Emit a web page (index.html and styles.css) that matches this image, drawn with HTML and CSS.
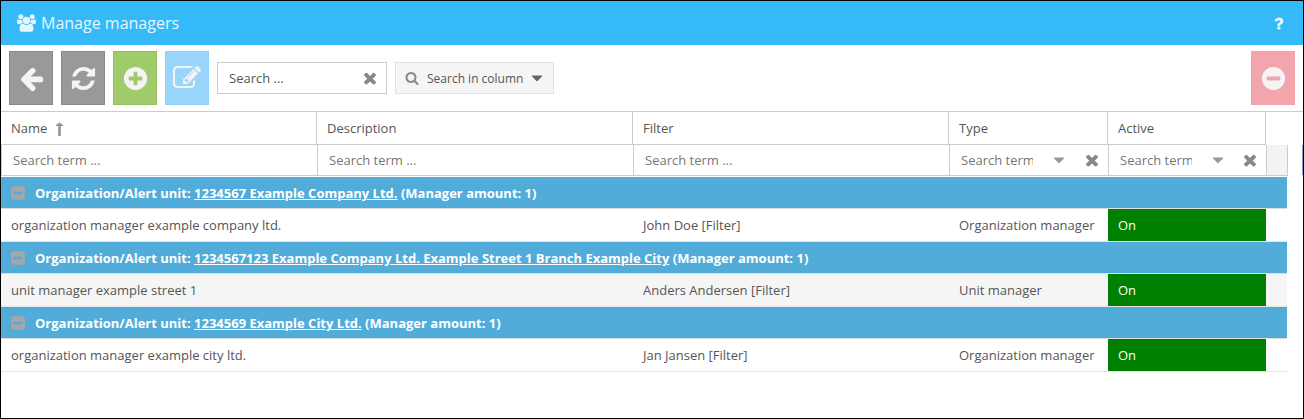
FILE: index.html
```html
<!DOCTYPE html>
<html lang="en">
<head>
    <meta charset="UTF-8">
    <title>Manage managers</title>
    <link rel="stylesheet" href="styles.css">
</head>
<body>
    <svg class="icon-defs" xmlns="http://www.w3.org/2000/svg">
        <symbol id="i-users" viewBox="0 0 1920 1792"><path d="M593 896q-162 5-265 128h-134q-82 0-138-40.500t-56-118.500q0-353 124-353 6 0 43.500 21t97.500 42.500 119 21.500q67 0 133-23-5 37-5 66 0 139 81 256zm1071 637q0 120-73 189.500t-194 69.500h-874q-121 0-194-69.500t-73-189.500q0-53 3.500-103.500t14-109 26.500-108.500 43-97.500 62-81 85.500-53.500 111.500-20q10 0 43 21.500t73 48 107 48 135 21.500 135-21.500 107-48 73-48 43-21.500q61 0 111.500 20t85.500 53.500 62 81 43 97.500 26.500 108.500 14 109 3.500 103.500zm-1024-1277q0 106-75 181t-181 75-181-75-75-181 75-181 181-75 181 75 75 181zm704 384q0 159-112.500 271.500t-271.500 112.500-271.500-112.500-112.500-271.500 112.500-271.500 271.500-112.500 271.500 112.500 112.500 271.500zm576 225q0 78-56 118.500t-138 40.500h-134q-103-123-265-128 81-117 81-256 0-29-5-66 66 23 133 23 59 0 119-21.500t97.500-42.500 43.500-21q124 0 124 353zm-128-609q0 106-75 181t-181 75-181-75-75-181 75-181 181-75 181 75 75 181z"/></symbol>
        <symbol id="i-question" viewBox="0 0 1792 1792"><path d="M1088 1256v240q0 16-12 28t-28 12h-240q-16 0-28-12t-12-28v-240q0-16 12-28t28-12h240q16 0 28 12t12 28zm316-600q0 54-15.500 101t-35 76.500-55 59.500-57.500 43.500-61 35.500q-41 23-68.500 65t-27.500 67q0 17-12 32.500t-28 15.500h-240q-15 0-25.500-18.500t-10.500-37.500v-45q0-83 65-156.500t143-108.500q59-27 84-56t25-76q0-42-46.500-74t-107.500-32q-65 0-108 29-35 25-107 115-13 16-31 16-12 0-25-8l-164-125q-13-10-15.500-25t5.500-28q160-266 464-266 80 0 161 31t146 83 106 127.500 41 158.500z"/></symbol>
        <symbol id="i-back" viewBox="0 0 1792 1792"><path d="M1664 896v128q0 53-32.500 90.500t-84.500 37.500h-704l293 294q38 36 38 90t-38 90l-75 76q-38 38-90 38-53 0-91-38l-651-652q-37-37-37-90 0-52 37-91l651-650q38-38 91-38 52 0 90 38l75 74q38 38 38 91t-38 91l-293 293h704q52 0 84.500 37.500t32.500 90.500z"/></symbol>
        <symbol id="i-refresh" viewBox="0 0 1792 1792"><path d="M1639 1056q0 5-1 7-64 268-268 434.500t-478 166.500q-146 0-282.500-55t-243.500-157l-129 129q-19 19-45 19t-45-19-19-45v-448q0-26 19-45t45-19h448q26 0 45 19t19 45-19 45l-137 137q71 66 161 102t187 36q134 0 250-65t186-179q11-17 53-117 8-23 30-23h192q13 0 22.500 9.500t9.500 22.500zm25-800v448q0 26-19 45t-45 19h-448q-26 0-45-19t-19-45 19-45l138-138q-148-137-349-137-134 0-250 65t-186 179q-11 17-53 117-8 23-30 23h-199q-13 0-22.500-9.500t-9.500-22.500v-7q65-268 270-434.500t480-166.500q146 0 284 55.500t245 156.500l130-129q19-19 45-19t45 19 19 45z"/></symbol>
        <symbol id="i-plus" viewBox="0 0 1792 1792"><path d="M1344 960v-128q0-26-19-45t-45-19h-256v-256q0-26-19-45t-45-19h-128q-26 0-45 19t-19 45v256h-256q-26 0-45 19t-19 45v128q0 26 19 45t45 19h256v256q0 26 19 45t45 19h128q26 0 45-19t19-45v-256h256q26 0 45-19t19-45zm320-64q0 209-103 385.500t-279.500 279.500-385.500 103-385.500-103-279.500-279.500-103-385.500 103-385.500 279.500-279.500 385.500-103 385.500 103 279.500 279.500 103 385.500z"/></symbol>
        <symbol id="i-minus" viewBox="0 0 1792 1792"><path d="M1344 960v-128q0-26-19-45t-45-19h-768q-26 0-45 19t-19 45v128q0 26 19 45t45 19h768q26 0 45-19t19-45zm320-64q0 209-103 385.500t-279.500 279.500-385.500 103-385.500-103-279.500-279.500-103-385.500 103-385.500 279.500-279.500 385.500-103 385.500 103 279.500 279.500 103 385.500z"/></symbol>
        <symbol id="i-edit" viewBox="0 0 1792 1792"><path d="M888 1184l116-116-152-152-116 116v56h96v96h56zm440-720q-16-16-33 1l-350 350q-17 17-1 33t33-1l350-350q17-17 1-33zm80 594v190q0 119-84.500 203.500t-203.500 84.500h-832q-119 0-203.500-84.500t-84.500-203.500v-832q0-119 84.500-203.500t203.500-84.500h832q63 0 117 25 15 7 18 23 3 17-9 29l-49 49q-14 14-32 8-23-6-45-6h-832q-66 0-113 47t-47 113v832q0 66 47 113t113 47h832q66 0 113-47t47-113v-126q0-13 9-22l64-64q15-15 35-7t20 29zm-96-738l288 288-672 672h-288v-288zm444 132l-92 92-288-288 92-92q28-28 68-28t68 28l152 152q28 28 28 68t-28 68z"/></symbol>
        <symbol id="i-times" viewBox="0 0 1792 1792"><path d="M1490 1322q0 40-28 68l-136 136q-28 28-68 28t-68-28l-294-294-294 294q-28 28-68 28t-68-28l-136-136q-28-28-28-68t28-68l294-294-294-294q-28-28-28-68t28-68l136-136q28-28 68-28t68 28l294 294 294-294q28-28 68-28t68 28l136 136q28 28 28 68t-28 68l-294 294 294 294q28 28 28 68z"/></symbol>
        <symbol id="i-search" viewBox="0 0 1792 1792"><path d="M1216 832q0-185-131.500-316.500t-316.500-131.500-316.500 131.500-131.500 316.500 131.500 316.500 316.500 131.500 316.500-131.500 131.500-316.500zm512 832q0 52-38 90t-90 38q-54 0-90-38l-343-342q-179 124-399 124-143 0-273.500-55.500t-225-150-150-225-55.500-273.500 55.500-273.500 150-225 225-150 273.500-55.500 273.500 55.500 225 150 150 225 55.500 273.500q0 220-124 399l343 343q37 37 37 90z"/></symbol>
        <symbol id="i-caret" viewBox="0 0 1792 1792"><path d="M1408 704q0 26-19 45l-448 448q-19 19-45 19t-45-19l-448-448q-19-19-19-45t19-45 45-19h896q26 0 45 19t19 45z"/></symbol>
        <symbol id="i-sort" viewBox="0 0 1792 1792" preserveAspectRatio="none"><path d="M1277 493q-9 19-29 19h-224v1248q0 14-9 23t-23 9h-192q-14 0-23-9t-9-23v-1248h-224q-21 0-29-19t5-35l350-384q10-10 23-10 14 0 24 10l355 384q13 16 5 35z"/></symbol>
        <symbol id="i-toggle" viewBox="0 0 1792 1792"><path d="M1408 960v-128q0-26-19-45t-45-19h-896q-26 0-45 19t-19 45v128q0 26 19 45t45 19h896q26 0 45-19t19-45zm256-544v960q0 119-84.500 203.500t-203.500 84.500h-960q-119 0-203.500-84.500t-84.500-203.500v-960q0-119 84.500-203.500t203.500-84.500h960q119 0 203.500 84.500t84.500 203.500z"/></symbol>
    </svg>

    <div class="window">
        <header class="title-bar">
            <svg class="title-icon"><use href="#i-users"/></svg>
            <span class="title-text">Manage managers</span>
            <svg class="help-icon"><use href="#i-question"/></svg>
        </header>

        <div class="toolbar">
            <button class="tool-btn btn-grey"><svg><use href="#i-back"/></svg></button>
            <button class="tool-btn btn-grey"><svg><use href="#i-refresh"/></svg></button>
            <button class="tool-btn btn-green"><svg><use href="#i-plus"/></svg></button>
            <button class="tool-btn btn-blue"><svg><use href="#i-edit"/></svg></button>
            <div class="search-box">
                <span class="search-text">Search ...</span>
                <svg class="clear-icon"><use href="#i-times"/></svg>
            </div>
            <div class="column-select">
                <svg class="search-icon"><use href="#i-search"/></svg>
                <span class="column-label">Search in column</span>
                <svg class="caret-icon"><use href="#i-caret"/></svg>
            </div>
            <button class="tool-btn btn-red"><svg><use href="#i-minus"/></svg></button>
        </div>

        <div class="grid-head">
            <div class="head-cell">Name <svg class="sort-icon"><use href="#i-sort"/></svg></div>
            <div class="head-cell">Description</div>
            <div class="head-cell">Filter</div>
            <div class="head-cell">Type</div>
            <div class="head-cell">Active</div>
        </div>

        <div class="grid-filter">
            <div class="filter-cell">Search term ...</div>
            <div class="filter-cell">Search term ...</div>
            <div class="filter-cell">Search term ...</div>
            <div class="filter-cell filter-select">
                <span class="filter-clip">Search term</span>
                <svg class="filter-caret"><use href="#i-caret"/></svg>
                <svg class="filter-clear"><use href="#i-times"/></svg>
            </div>
            <div class="filter-cell filter-select">
                <span class="filter-clip">Search term</span>
                <svg class="filter-caret"><use href="#i-caret"/></svg>
                <svg class="filter-clear"><use href="#i-times"/></svg>
            </div>
            <div class="filter-end"></div>
        </div>

        <div class="group-row">
            <svg class="group-toggle"><use href="#i-toggle"/></svg>
            <span>Organization/Alert unit: <a href="#">1234567 Example Company Ltd.</a> (Manager amount: 1)</span>
        </div>
        <div class="data-row">
            <div class="data-cell">organization manager example company ltd.</div>
            <div class="data-cell"></div>
            <div class="data-cell">John Doe [Filter]</div>
            <div class="data-cell">Organization manager</div>
            <div class="data-cell state-on">On</div>
        </div>

        <div class="group-row">
            <svg class="group-toggle"><use href="#i-toggle"/></svg>
            <span>Organization/Alert unit: <a href="#">1234567123 Example Company Ltd. Example Street 1 Branch Example City</a> (Manager amount: 1)</span>
        </div>
        <div class="data-row row-alt">
            <div class="data-cell">unit manager example street 1</div>
            <div class="data-cell"></div>
            <div class="data-cell">Anders Andersen [Filter]</div>
            <div class="data-cell">Unit manager</div>
            <div class="data-cell state-on">On</div>
        </div>

        <div class="group-row">
            <svg class="group-toggle"><use href="#i-toggle"/></svg>
            <span>Organization/Alert unit: <a href="#">1234569 Example City Ltd.</a> (Manager amount: 1)</span>
        </div>
        <div class="data-row">
            <div class="data-cell">organization manager example city ltd.</div>
            <div class="data-cell"></div>
            <div class="data-cell">Jan Jansen [Filter]</div>
            <div class="data-cell">Organization manager</div>
            <div class="data-cell state-on">On</div>
        </div>
    </div>
</body>
</html>
```
FILE: styles.css
```css
* { box-sizing: border-box; }
html, body { margin: 0; height: 100%; }
body { font-family: 'Open Sans', sans-serif; font-size: 13px; color: #555; background: #fff; overflow: hidden; }
svg { fill: currentColor; display: block; flex: none; }
.icon-defs { display: none; }

.window { width: 1304px; height: 419px; border: 1px solid #000; overflow: hidden; }

.title-bar { height: 44px; background: #36b9f8; color: #e6f6fe; display: flex; align-items: center; padding: 0 16px 0 16px; }
.title-icon { width: 19px; height: 18px; margin-right: 5px; }
.title-text { font-size: 16px; flex: 1; }
.help-icon { width: 17px; height: 17px; margin-top: 1px; }

.toolbar { height: 67px; display: flex; align-items: center; gap: 8px; padding: 0 8px; border-bottom: 1px solid #ccc; }
.tool-btn { width: 44px; height: 54px; padding: 0; border: 1px solid; display: flex; align-items: center; justify-content: center; color: #f4f4f4; }
.tool-btn svg { width: 27px; height: 27px; }
.tool-btn.btn-blue svg { width: 28px; height: 28px; }
.btn-grey { background: #999; border-color: #888; }
.btn-green { background: #a0cb6b; border-color: #93c05c; }
.btn-blue { background: #9ad5fb; border-color: #8fd0fa; }
.btn-red { background: #f3a5ad; border-color: #f3a5ad; margin-left: auto; }

.search-box { width: 170px; height: 32px; border: 1px solid #ccc; display: flex; align-items: center; justify-content: space-between; padding: 0 7px 0 11px; }
.clear-icon { width: 18px; height: 18px; color: #888; }
.column-select { width: 159px; height: 32px; border: 1px solid #e2e2e2; background: #f5f5f5; display: flex; align-items: center; padding: 0 9px; }
.search-icon { width: 14px; height: 14px; color: #888; margin-right: 8px; }
.column-label { font-size: 12px; white-space: nowrap; }
.caret-icon { width: 18px; height: 18px; color: #666; margin-left: 5px; }

.grid-head { display: grid; grid-template-columns: 316px 316px 316px 159px 158px; width: 1265px; height: 33px; border-bottom: 1px solid #ccc; }
.head-cell { display: flex; align-items: center; gap: 3px; padding-left: 10px; border-right: 1px solid #ccc; }
.sort-icon { width: 19px; height: 14px; margin-top: 1px; color: #999; }

.grid-filter { position: relative; display: grid; grid-template-columns: 317px 316px 316px 159px 158px 21px; width: 1287px; height: 31px; margin-bottom: 1px; border-bottom: 1px solid #ccc; }
/* thin blue edge at the far right of the filter row */
.grid-filter::after { content: ""; position: absolute; top: 0; left: 1301px; width: 1px; height: 30px; background: #7d9fd0; }
.filter-cell { display: flex; align-items: center; padding-left: 11px; color: #777; border-right: 1px solid #ccc; }
.filter-cell:first-child { padding-left: 12px; box-shadow: inset 1px 0 0 #c5cfdf; }
.filter-select { padding-right: 7px; }
.filter-clip { width: 72px; overflow: hidden; white-space: nowrap; }
.filter-caret { width: 18px; height: 18px; color: #999; margin-left: 17px; }
.filter-clear { width: 18px; height: 18px; color: #888; margin-left: auto; }
.filter-end { background: #f3f3f3; border-right: 1px solid #ccc; }

.group-row { width: 1286px; height: 32px; background: #52acd9; border-bottom: 1px solid #ddd; color: #fff; font-weight: 700; display: flex; align-items: center; padding: 1px 0 0 9px; }
.group-row a { color: #fff; }
.group-toggle { width: 16px; height: 16px; color: #a6a6a6; margin-right: 9px; }

.data-row { display: grid; grid-template-columns: 316px 316px 316px 159px 158px; width: 1286px; height: 33px; border-bottom: 1px solid #e5e5e5; }
.data-cell { display: flex; align-items: center; padding-left: 10px; color: #555; }
.row-alt { background: #f5f5f5; }
.state-on { background: #008000; color: #fff; }
```
